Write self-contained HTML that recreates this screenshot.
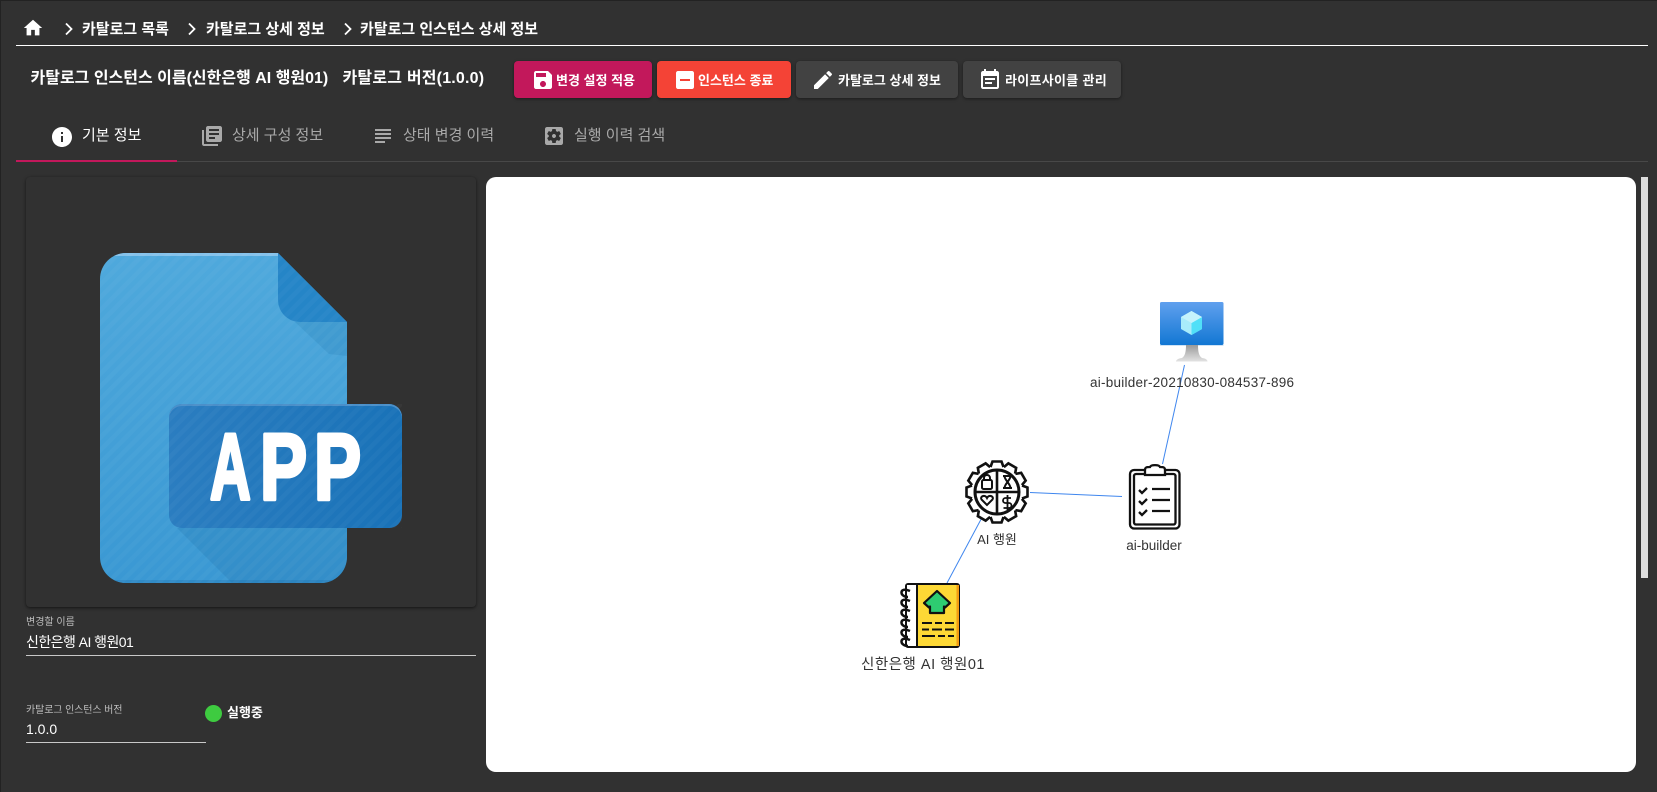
<!DOCTYPE html>
<html lang="ko">
<head>
<meta charset="utf-8">
<title>카탈로그 인스턴스 상세 정보</title>
<style>
html,body{margin:0;padding:0;width:1657px;height:792px;overflow:hidden;background:#313131}
body{position:relative;font-family:"Liberation Sans","Noto Sans CJK KR",sans-serif;color:#fff}
.a{position:absolute}
.t{position:absolute;white-space:nowrap;line-height:20px;height:20px}
.bc{font-size:15px;font-weight:700}
.title{font-size:16px;font-weight:700}
.btn{position:absolute;top:61px;height:37px;border-radius:4px;box-shadow:0 1px 3px rgba(0,0,0,.45)}
.bt{font-size:13px;font-weight:700;top:71px}
.tab{font-size:15px;color:#a9a9a9;top:126px}
.lab{font-size:10px;color:#bdbdbd}
.val{font-size:14px;color:#fff}
svg.i{position:absolute;fill:#fff}
</style>
</head>
<body>
<div class="a" style="left:0;top:0;width:1657px;height:1px;background:#222"></div>
<div class="a" style="left:0;top:0;width:1px;height:792px;background:#222"></div>

<!-- breadcrumb -->
<svg class="i" style="left:22px;top:17px" width="22" height="22" viewBox="0 0 24 24"><path d="M10 20v-6h4v6h5v-8h3L12 3 2 12h3v8z"/></svg>
<svg class="i" style="left:61px;top:21px;fill:none;stroke:#fff;stroke-width:1.800" width="16" height="16" viewBox="0 0 16 16"><path d="M5 2.500L10.500 8 5 13.500"/></svg>
<div class="t bc" style="left:82px;top:20px">카탈로그 목록</div>
<svg class="i" style="left:184px;top:21px;fill:none;stroke:#fff;stroke-width:1.800" width="16" height="16" viewBox="0 0 16 16"><path d="M5 2.500L10.500 8 5 13.500"/></svg>
<div class="t bc" style="left:206px;top:20px">카탈로그 상세 정보</div>
<svg class="i" style="left:340px;top:21px;fill:none;stroke:#fff;stroke-width:1.800" width="16" height="16" viewBox="0 0 16 16"><path d="M5 2.500L10.500 8 5 13.500"/></svg>
<div class="t bc" style="left:360px;top:20px">카탈로그 인스턴스 상세 정보</div>
<div class="a" style="left:16px;top:45px;width:1632px;height:1px;background:#fff"></div>

<!-- title -->
<div class="t title" style="left:30.500px;top:68.500px">카탈로그 인스턴스 이름(신한은행 AI 행원01)</div>
<div class="t title" style="left:342.500px;top:68.500px;letter-spacing:.2px">카탈로그 버전(1.0.0)</div>

<!-- buttons -->
<div class="btn" style="left:514px;width:138px;background:#c2185b"></div>
<div class="btn" style="left:657px;width:134px;background:#f44336"></div>
<div class="btn" style="left:796px;width:162px;background:#424242"></div>
<div class="btn" style="left:963px;width:158px;background:#424242"></div>
<svg class="i" style="left:531px;top:68px" width="24" height="24" viewBox="0 0 24 24"><path d="M17 3H5c-1.110 0-2 .9-2 2v14c0 1.100.89 2 2 2h14c1.100 0 2-.9 2-2V7l-4-4zm-5 16c-1.660 0-3-1.340-3-3s1.340-3 3-3 3 1.340 3 3-1.340 3-3 3zm3-10H5V5h10v4z"/></svg>
<div class="t bt" style="left:556px">변경 설정 적용</div>
<svg class="i" style="left:673px;top:68px" width="24" height="24" viewBox="0 0 24 24"><path d="M19 3H5c-1.100 0-2 .9-2 2v14c0 1.100.9 2 2 2h14c1.100 0 2-.9 2-2V5c0-1.100-.9-2-2-2zm-2 10H7v-2h10v2z"/></svg>
<div class="t bt" style="left:698px">인스턴스 종료</div>
<svg class="i" style="left:811px;top:68px" width="24" height="24" viewBox="0 0 24 24"><path d="M3 17.250V21h3.750L17.810 9.940l-3.750-3.750L3 17.250zM20.710 7.040c.39-.39.39-1.020 0-1.410l-2.340-2.340c-.39-.39-1.020-.39-1.410 0l-1.830 1.830 3.750 3.750 1.830-1.830z"/></svg>
<div class="t bt" style="left:838px">카탈로그 상세 정보</div>
<svg class="i" style="left:978px;top:68px" width="24" height="24" viewBox="0 0 24 24"><path d="M17 10H7v2h10v-2zm2-7h-1V1h-2v2H8V1H6v2H5c-1.110 0-1.990.9-1.990 2L3 19c0 1.100.89 2 2 2h14c1.100 0 2-.9 2-2V5c0-1.100-.9-2-2-2zm0 16H5V8h14v11zm-5-5H7v2h7v-2z"/></svg>
<div class="t bt" style="left:1005px;letter-spacing:.3px">라이프사이클 관리</div>

<!-- tabs -->
<svg class="i" style="left:50px;top:125px" width="24" height="24" viewBox="0 0 24 24"><path d="M12 2C6.480 2 2 6.480 2 12s4.480 10 10 10 10-4.480 10-10S17.520 2 12 2zm1 15h-2v-6h2v6zm0-8h-2V7h2v2z"/></svg>
<div class="t tab" style="left:82px;color:#fff">기본 정보</div>
<svg class="i" style="left:200px;top:124px;fill:#a9a9a9" width="24" height="24" viewBox="0 0 24 24"><path d="M4 6H2v14c0 1.100.9 2 2 2h14v-2H4V6zm16-4H8c-1.100 0-2 .9-2 2v12c0 1.100.9 2 2 2h12c1.100 0 2-.9 2-2V4c0-1.100-.9-2-2-2zm-1 9H9V9h10v2zm-4 4H9v-2h6v2zm4-8H9V5h10v2z"/></svg>
<div class="t tab" style="left:232px">상세 구성 정보</div>
<svg class="i" style="left:371px;top:124px;fill:#a9a9a9" width="24" height="24" viewBox="0 0 24 24"><path d="M14 17H4v2h10v-2zm6-8H4v2h16V9zM4 15h16v-2H4v2zM4 5v2h16V5H4z"/></svg>
<div class="t tab" style="left:403px">상태 변경 이력</div>
<svg class="i" style="left:542px;top:124px;fill:#a9a9a9" width="24" height="24" viewBox="0 0 24 24"><path d="M12 10c-1.100 0-2 .9-2 2s.9 2 2 2 2-.9 2-2-.9-2-2-2zm7-7H5c-1.110 0-2 .9-2 2v14c0 1.100.89 2 2 2h14c1.110 0 2-.9 2-2V5c0-1.100-.89-2-2-2zm-1.750 9c0 .23-.02.46-.05.68l1.480 1.160c.13.11.17.3.08.45l-1.400 2.420c-.09.15-.27.21-.43.15l-1.740-.7c-.36.28-.76.51-1.180.69l-.26 1.850c-.03.17-.18.3-.35.3h-2.800c-.17 0-.32-.13-.35-.29l-.26-1.850c-.43-.18-.82-.41-1.180-.69l-1.740.7c-.16.06-.34 0-.43-.15l-1.400-2.420c-.09-.15-.05-.34.08-.45l1.480-1.160c-.03-.23-.05-.46-.05-.69 0-.23.02-.46.05-.68l-1.480-1.160c-.13-.11-.17-.3-.08-.45l1.400-2.420c.09-.15.27-.21.43-.15l1.740.7c.36-.28.76-.51 1.180-.69l.26-1.850c.03-.17.18-.3.35-.3h2.800c.17 0 .32.13.35.29l.26 1.850c.43.18.82.41 1.180.69l1.740-.7c.16-.06.34 0 .43.15l1.400 2.420c.09.15.05.34-.08.45l-1.480 1.160c.03.23.05.46.05.69z"/></svg>
<div class="t tab" style="left:574px">실행 이력 검색</div>
<div class="a" style="left:16px;top:161px;width:1632px;height:1px;background:#484848"></div>
<div class="a" style="left:16px;top:160px;width:161px;height:2px;background:#c2185b"></div>

<!-- left card -->
<div class="a" style="left:26px;top:177px;width:450px;height:430px;background:#313131;border-radius:4px;box-shadow:0 1px 3px rgba(0,0,0,.6)"></div>
<svg class="a" style="left:0;top:0" width="1657" height="792" viewBox="0 0 1657 792">
  <defs>
    <linearGradient id="fg" x1="0" y1="0" x2="0" y2="1"><stop offset="0" stop-color="#4fa9dc"/><stop offset="1" stop-color="#3a98d3"/></linearGradient>
    <linearGradient id="bg" x1="0" y1="0" x2="1" y2="0"><stop offset="0" stop-color="#2b7dc0"/><stop offset="1" stop-color="#1972b8"/></linearGradient>
    <pattern id="st" width="9" height="9" patternUnits="userSpaceOnUse" patternTransform="rotate(45)"><rect width="4.500" height="9" fill="#fff" fill-opacity=".028"/></pattern>
    <clipPath id="fc"><path d="M126 253H278L347 322V557a26 26 0 0 1-26 26H126a26 26 0 0 1-26-26V279a26 26 0 0 1 26-26z"/></clipPath>
  </defs>
  <path d="M126 253H278L347 322V557a26 26 0 0 1-26 26H126a26 26 0 0 1-26-26V279a26 26 0 0 1 26-26z" fill="url(#fg)"/>
  <g clip-path="url(#fc)">
    <rect x="100" y="253" width="178" height="3" fill="#86c2ea"/>
    <rect x="100" y="580" width="247" height="3" fill="#318bc6"/>
    <path d="M295 322H347V356L329 354z" fill="#1b6ea8" fill-opacity=".18"/>
    <path d="M177 528H347V583H232z" fill="#1b6ea8" fill-opacity=".22"/>
  </g>
  <path d="M278 253L347 322H300a22 22 0 0 1-22-22z" fill="#2585c7"/>
  <rect x="169" y="404" width="233" height="124" rx="13" fill="url(#bg)"/>
  <path d="M169 417a13 13 0 0 1 13-13H389a13 13 0 0 1 13 13v2a13 13 0 0 0-13-13H182a13 13 0 0 0-13 13z" fill="#4a8fc9"/>
  <g font-family="Liberation Sans" font-weight="700" font-size="94" fill="#fff" stroke="#fff" stroke-width="4" stroke-linejoin="round">
    <text transform="translate(210 499) scale(.6 1)" x="0" y="0">A</text>
    <text transform="translate(260 499) scale(.75 1)" x="0 72" y="0">PP</text>
  </g>
  <path d="M126 253H278L347 322V404H402V528H347V557a26 26 0 0 1-26 26H126a26 26 0 0 1-26-26V279a26 26 0 0 1 26-26z" fill="url(#st)"/>
</svg>

<!-- fields -->
<div class="t lab" style="left:26px;top:613px">변경할 이름</div>
<div class="t val" style="left:26px;top:632px;letter-spacing:-.55px">신한은행 AI 행원01</div>
<div class="a" style="left:26px;top:655px;width:450px;height:1px;background:#c8c8c8"></div>
<div class="t lab" style="left:26px;top:701px;letter-spacing:-.1px">카탈로그 인스턴스 버전</div>
<div class="t val" style="left:26px;top:719px">1.0.0</div>
<div class="a" style="left:26px;top:742px;width:180px;height:1px;background:#c8c8c8"></div>
<div class="a" style="left:205px;top:705px;width:17px;height:17px;border-radius:50%;background:#3ecb40"></div>
<div class="t" style="left:227px;top:703px;font-size:13px;font-weight:700">실행중</div>

<!-- diagram panel -->
<div class="a" style="left:486px;top:177px;width:1150px;height:595px;background:#fff;border-radius:10px"></div>
<div class="a" style="left:1641px;top:177px;width:7px;height:401px;background:#ddd"></div>
<svg class="a" style="left:0;top:0" width="1657" height="792" viewBox="0 0 1657 792">
  <defs>
    <linearGradient id="mon" x1="0" y1="0" x2="0" y2="1"><stop offset="0" stop-color="#60a0ee"/><stop offset="1" stop-color="#1277d3"/></linearGradient>
    <linearGradient id="std" x1="0" y1="0" x2="0" y2="1"><stop offset="0" stop-color="#9a9a9a"/><stop offset="1" stop-color="#e2e2e2"/></linearGradient>
  </defs>
  <!-- edges -->
  <g stroke="#3f86ee" stroke-width="1" fill="none">
    <path d="M1184.500 365L1162.500 464"/>
    <path d="M1030 492.500L1122 496.500"/>
    <path d="M994 495L947 583"/>
  </g>
  <!-- monitor -->
  <rect x="1160" y="302" width="63.500" height="43" rx="1.500" fill="url(#mon)"/>
  <rect x="1160" y="345" width="63.500" height="1" fill="#cfe3f5"/>
  <path d="M1186 345H1198C1198 352 1199 356 1202 358C1206 358.500 1207.500 360 1207.500 361.500H1176C1176 360 1178 358.500 1182 358C1185 356 1186 352 1186 345z" fill="url(#std)"/>
  <path d="M1191.500 311L1202 317V329L1191.500 335L1181 329V317z" fill="#a9ecfb"/>
  <path d="M1191.500 323L1202 317V329L1191.500 335z" fill="#50e0f8"/>
  <path d="M1191.500 311L1202 317L1191.500 323L1181 317z" fill="#c5f3fc"/>
  <text x="1090" y="387" font-family="Liberation Sans" font-size="13.500" fill="#333" textLength="204">ai-builder-20210830-084537-896</text>

  <!-- gear -->
  <g transform="translate(997 492)" stroke="#111" fill="#fff" stroke-width="2.600">
    <g>
      <path d="M-6.500 -25L-4.500 -30.500H4.500L6.500 -25"/>
      <path transform="rotate(30)" d="M-6.500 -25L-4.500 -30.500H4.500L6.500 -25"/>
      <path transform="rotate(60)" d="M-6.500 -25L-4.500 -30.500H4.500L6.500 -25"/>
      <path transform="rotate(90)" d="M-6.500 -25L-4.500 -30.500H4.500L6.500 -25"/>
      <path transform="rotate(120)" d="M-6.500 -25L-4.500 -30.500H4.500L6.500 -25"/>
      <path transform="rotate(150)" d="M-6.500 -25L-4.500 -30.500H4.500L6.500 -25"/>
      <path transform="rotate(180)" d="M-6.500 -25L-4.500 -30.500H4.500L6.500 -25"/>
      <path transform="rotate(210)" d="M-6.500 -25L-4.500 -30.500H4.500L6.500 -25"/>
      <path transform="rotate(240)" d="M-6.500 -25L-4.500 -30.500H4.500L6.500 -25"/>
      <path transform="rotate(270)" d="M-6.500 -25L-4.500 -30.500H4.500L6.500 -25"/>
      <path transform="rotate(300)" d="M-6.500 -25L-4.500 -30.500H4.500L6.500 -25"/>
      <path transform="rotate(330)" d="M-6.500 -25L-4.500 -30.500H4.500L6.500 -25"/>
    </g>
    <circle r="25" stroke="none"/>
    <circle r="22" fill="none" stroke-width="3"/>
    <path d="M-22 0H22M0 -22V22" fill="none"/>
    <rect x="-15" y="-12" width="10" height="9" rx="1.500" fill="none" stroke-width="2"/>
    <path d="M-13 -12V-14a3 3 0 0 1 6 0V-12" fill="none" stroke-width="2"/>
    <path d="M6 -16H15M6 -4H15M7.500 -16C7.500 -12 13.500 -8 13.500 -4M13.500 -16C13.500 -12 7.500 -8 7.500 -4" fill="none" stroke-width="2"/>
    <path d="M-10 13L-15.500 7.500C-17.500 4.500 -12 2 -10 6C-8 2 -2.500 4.500 -4.500 7.500z" fill="none" stroke-width="2"/>
    <path d="M14 6H8.500a2.500 2.500 0 0 0 0 5H12a2.500 2.500 0 0 1 0 5H6.500M10.500 3V18" fill="none" stroke-width="1.800"/>
  </g>
  <text x="997" y="544" text-anchor="middle" font-family="Liberation Sans,Noto Sans CJK KR" font-size="13" fill="#333">AI 행원</text>

  <!-- clipboard -->
  <g stroke="#111" fill="none" stroke-width="2.300">
    <rect x="1130" y="470" width="49.500" height="58.500" rx="4" fill="#fff"/>
    <rect x="1134" y="474" width="41.500" height="50.500" rx="2"/>
    <path d="M1145 475V470C1145 467 1147 467 1150 467C1151 464.500 1159 464.500 1160 467C1163 467 1165 467 1165 470V475z" fill="#fff"/>
    <path d="M1139 490L1142 493L1147 488M1139 501L1142 504L1147 499M1139 512L1142 515L1147 510"/>
    <path d="M1152 489H1170M1152 500H1170M1152 511H1170"/>
  </g>
  <text x="1154" y="550" text-anchor="middle" font-family="Liberation Sans" font-size="13.500" fill="#333">ai-builder</text>

  <!-- book -->
  <rect x="906" y="584" width="53" height="63" rx="2" fill="#fdd835" stroke="#111" stroke-width="2"/>
  <rect x="956.500" y="585" width="2.500" height="61" fill="#f39c12"/>
  <rect x="907" y="585" width="9" height="61" fill="#fff"/>
  <path d="M917 584V647" stroke="#111" stroke-width="2"/>
  <g fill="none" stroke="#111" stroke-width="2.500">
    <path d="M910 591C899 586 899 597 908 597"/>
    <path d="M910 601C899 596 899 607 908 607"/>
    <path d="M910 611C899 606 899 617 908 617"/>
    <path d="M910 621C899 616 899 627 908 627"/>
    <path d="M910 631C899 626 899 637 908 637"/>
    <path d="M910 640C899 635 899 646 908 646"/>
  </g>
  <path d="M937 591L950 603L945 607.500L944 606.500V613H930V606.500L929 607.500L924 603z" fill="#2ecc71" stroke="#111" stroke-width="2.200" stroke-linejoin="round"/>
  <path d="M922 623H932M935 623H942M945 623H954M922 629.500H929M932 629.500H942M945 629.500H954M922 636H935M938 636H945M948 636H954" stroke="#111" stroke-width="2"/>
  <text x="861" y="669" font-family="Liberation Sans,Noto Sans CJK KR" font-size="14.500" fill="#333" textLength="123.500">신한은행 AI 행원01</text>
</svg>
</body>
</html>
